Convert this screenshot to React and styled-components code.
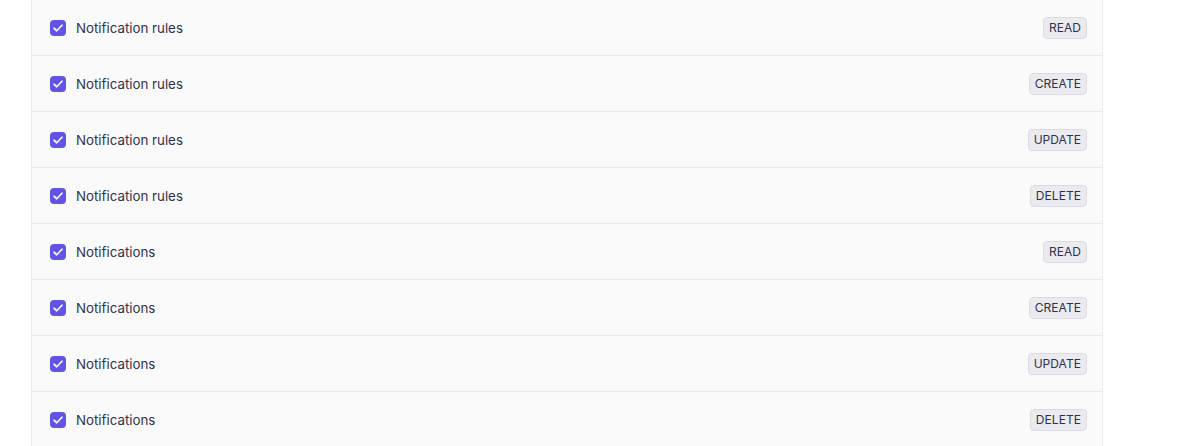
import React from 'react';
import styled, { createGlobalStyle } from 'styled-components';

const GlobalStyle = createGlobalStyle`
  body {
    margin: 0;
    background: #ffffff;
    font-family: 'Inter', 'Noto Sans', sans-serif;
  }
`;

const Page = styled.div`
  padding-left: 31px;
  width: 1072px;
`;

const Panel = styled.div`
  background: #fafafb;
  border-left: 1px solid #eaeaef;
  border-right: 1px solid #eaeaef;
`;

const Row = styled.div`
  display: flex;
  align-items: center;
  justify-content: space-between;
  height: 55px;
  padding: 0 15px 0 18px;
  border-bottom: 1px solid #eaeaef;
`;

const Label = styled.label`
  display: flex;
  align-items: center;
  gap: 10px;
  font-size: 13.3px;
  font-weight: 400;
  color: #32324d;
`;

const Box = styled.span`
  width: 16px;
  height: 16px;
  border-radius: 4px;
  background: #6354e6;
  display: flex;
  align-items: center;
  justify-content: center;
`;

const Badge = styled.span`
  font-size: 12px;
  font-weight: 400;
  letter-spacing: 0.05px;
  color: #32324d;
  background: #eaeaef;
  border: 1px solid #dcdce4;
  border-radius: 4px;
  padding: 3px 5px;
  line-height: 14px;
`;

const Check = () => (
  <svg width="10" height="8" viewBox="0 0 10 8" fill="none">
    <path d="M1 4.2 3.7 6.8 9 1.2" stroke="#fff" strokeWidth="1.6" strokeLinecap="round" strokeLinejoin="round" />
  </svg>
);

const rows = [
  ['Notification rules', 'READ'],
  ['Notification rules', 'CREATE'],
  ['Notification rules', 'UPDATE'],
  ['Notification rules', 'DELETE'],
  ['Notifications', 'READ'],
  ['Notifications', 'CREATE'],
  ['Notifications', 'UPDATE'],
  ['Notifications', 'DELETE'],
];

export default function App() {
  return (
    <Page>
      <GlobalStyle />
      <Panel>
        {rows.map(([name, action], i) => (
          <Row key={i}>
            <Label>
              <Box><Check /></Box>
              {name}
            </Label>
            <Badge>{action}</Badge>
          </Row>
        ))}
      </Panel>
    </Page>
  );
}
